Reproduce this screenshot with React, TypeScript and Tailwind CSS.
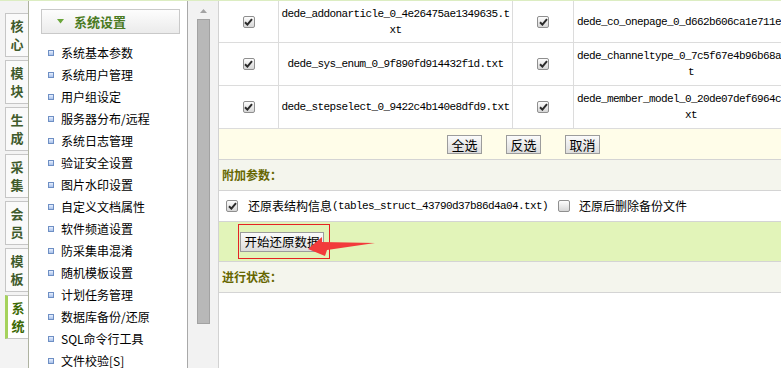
import React from 'react';

const cjk = "font-['Noto_Sans_CJK_SC','Noto_Sans',sans-serif]";
const mono = "font-['Liberation_Mono',monospace] text-[11px] tracking-[-0.6px]";

const tabs = [
  ['核', '心'],
  ['模', '块'],
  ['生', '成'],
  ['采', '集'],
  ['会', '员'],
  ['模', '板'],
  ['系', '统'],
];

const menu = [
  '系统基本参数',
  '系统用户管理',
  '用户组设定',
  '服务器分布/远程',
  '系统日志管理',
  '验证安全设置',
  '图片水印设置',
  '自定义文档属性',
  '软件频道设置',
  '防采集串混淆',
  '随机模板设置',
  '计划任务管理',
  '数据库备份/还原',
  'SQL命令行工具',
  '文件校验[S]',
];

const files: [string, string][] = [
  ['dede_addonarticle_0_4e26475ae1349635.txt', 'dede_co_onepage_0_d662b606ca1e711e.txt'],
  ['dede_sys_enum_0_9f890fd914432f1d.txt', 'dede_channeltype_0_7c5f67e4b96b68a1.txt'],
  ['dede_stepselect_0_9422c4b140e8dfd9.txt', 'dede_member_model_0_20de07def6964c21.txt'],
];

const Check: React.FC<{ checked?: boolean }> = ({ checked }) => (
  <span className="inline-flex h-[12px] w-[12px] shrink-0 items-center justify-center rounded-[2px] border border-[#8f8f8f] bg-gradient-to-b from-[#fdfdfd] to-[#d6d6d6]">
    {checked && (
      <svg width="9" height="8" viewBox="0 0 9 8">
        <path d="M1 4.2 L3.4 6.6 L8 1.2" fill="none" stroke="#2b2b2b" strokeWidth="2" />
      </svg>
    )}
  </span>
);

const Btn: React.FC<{ children: React.ReactNode; className?: string }> = ({ children, className }) => (
  <button
    className={`flex items-center justify-center border border-[#9c9c9c] bg-gradient-to-b from-[#fbfbfb] to-[#dcdcdc] leading-none text-black ${className ?? ''}`}
  >
    {children}
  </button>
);

export default function App() {
  return (
    <div className={`flex h-[368px] w-[781px] overflow-hidden border-t border-[#dcedc2] bg-white ${cjk}`}>
      {/* left tab column */}
      <div className="flex w-[29px] shrink-0 flex-col gap-[3px] border-r border-[#aeb2a0] bg-[#f3f3f3] pt-[12px]">
        {tabs.map((t, i) => {
          const active = i === tabs.length - 1;
          return (
            <div
              key={i}
              className={
                active
                  ? 'ml-[5px] flex h-[44px] w-[23px] flex-col items-center justify-center border border-r-0 border-l-[3px] border-[#c6c6c6] border-l-[#a5d25c] bg-white text-[13px] font-bold leading-[18px] text-[#3d6a06]'
                  : 'ml-[5px] flex h-[44px] w-[23px] flex-col items-center justify-center border border-r-0 border-[#c6c6c6] bg-[#fafafa] text-[13px] font-bold leading-[18px] text-[#3f5a2c]'
              }
            >
              <span className="block h-[18px]">{t[0]}</span>
              <span className="block h-[18px]">{t[1]}</span>
            </div>
          );
        })}
      </div>

      {/* sidebar menu */}
      <div className="w-[159px] shrink-0 border-r border-[#a9a9a9] bg-white pt-[8px]">
        <div className="ml-[12px] flex h-[25px] w-[139px] items-center border border-[#c9c9c9] bg-gradient-to-b from-[#fdfdfd] to-[#ebebeb]">
          <svg className="ml-[15px]" width="7" height="5" viewBox="0 0 7 5">
            <path d="M0 0 H7 L3.5 4.5 Z" fill="#6aa63a" />
          </svg>
          <span className="ml-[10px] text-[13px] font-bold text-[#4a7a22]">系统设置</span>
        </div>
        <ul className="mt-[8px]">
          {menu.map((m) => (
            <li key={m} className="flex h-[22px] items-center text-[12px] text-black">
              <span className="ml-[19px] mr-[7px] h-[6px] w-[6px] border border-[#6e8fc4] bg-gradient-to-b from-[#e8f0ff] to-[#a9c2ea]" />
              {m}
            </li>
          ))}
        </ul>
      </div>

      {/* scrollbar */}
      <div className="flex w-[30px] shrink-0 flex-col items-center bg-[#f2f2f2] pt-[8px]">
        <svg width="7" height="4" viewBox="0 0 7 4">
          <path d="M0 4 L3.5 0 L7 4 Z" fill="#a3a3a3" />
        </svg>
        <div className="mt-[6px] h-[305px] w-[13px] border border-[#a2a2a2] bg-[#b8b8b8]" />
      </div>

      {/* main */}
      <div className="min-w-0 flex-1 overflow-hidden border-l border-[#d2d2d2]">
        <div className="w-[600px]">
          {files.map((row, r) => (
            <div
              key={r}
              className={`flex border-b border-[#dcdcdc] ${r === 0 ? 'h-[42px]' : 'h-[43px]'}`}
            >
              <div className="flex w-[60px] items-center justify-center border-r border-[#dcdcdc]">
                <Check checked />
              </div>
              <div className={`flex w-[234px] items-center justify-center text-center leading-[16px] break-all text-black ${mono} border-r border-[#dcdcdc]`}>
                {row[0]}
              </div>
              <div className="flex w-[61px] items-center justify-center border-r border-[#dcdcdc]">
                <Check checked />
              </div>
              <div className={`flex w-[234px] items-center justify-center text-center leading-[16px] break-all text-black ${mono}`}>
                {row[1]}
              </div>
            </div>
          ))}
        </div>

        <div className="flex h-[31px] items-center gap-[24px] border-b border-[#d4d4d4] bg-[#fffde9] pl-[228px]">
          <Btn className="h-[19px] w-[35px] text-[13px]">全选</Btn>
          <Btn className="h-[19px] w-[35px] text-[13px]">反选</Btn>
          <Btn className="h-[19px] w-[35px] text-[13px]">取消</Btn>
        </div>

        <div className="flex h-[31px] items-center border-b border-[#d4d4d4] bg-[#f4f5ed] pl-[3px] text-[12px] font-bold text-[#666600]">
          附加参数：
        </div>

        <div className="flex h-[31px] items-center border-b border-[#d4d4d4] bg-white pl-[7px] text-[12px] text-black">
          <Check checked />
          <span className="ml-[10px]">还原表结构信息</span>
          <span className={mono}>(tables_struct_43790d37b86d4a04.txt)</span>
          <span className="ml-[10px] flex">
            <Check />
          </span>
          <span className="ml-[9px]">还原后删除备份文件</span>
        </div>

        <div className="relative h-[40px] border-b border-[#d4d4d4] bg-[#e2f4b9] pl-[21px] pt-[10px]">
          <Btn className="h-[20px] w-[84px] text-[12.5px]">开始还原数据</Btn>
          <div className="pointer-events-none absolute left-[19px] top-[2px] h-[35px] w-[92px] border border-[#e52323]" />
          <svg className="pointer-events-none absolute left-[86px] top-[13px]" width="72" height="24" viewBox="0 0 72 24">
            <polygon points="3,14 17,2 17,7 70,8 22,15 20,21" fill="#f23b3b" />
          </svg>
        </div>

        <div className="flex h-[31px] items-center border-b border-[#d4d4d4] bg-[#f4f5ed] pl-[3px] text-[12px] font-bold text-[#666600]">
          进行状态：
        </div>
      </div>
    </div>
  );
}
